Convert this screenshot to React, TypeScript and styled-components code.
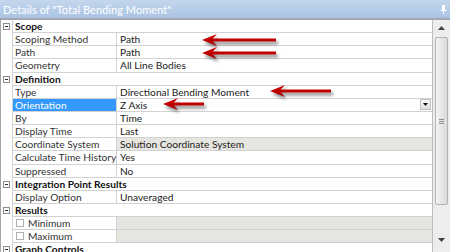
import styled, { createGlobalStyle } from "styled-components";

const GlobalStyle = createGlobalStyle`
  html, body {
    margin: 0;
    padding: 0;
    background: #ffffff;
  }
  body {
    font-family: Lato, "Liberation Sans", sans-serif;
    overflow: hidden;
  }
`;

const ROW_H = 13.15;

const Panel = styled.div`
  position: relative;
  width: 450px;
  height: 252px;
  overflow: hidden;
  display: flex;
  flex-direction: column;
  background: #ffffff;
`;

const TitleBar = styled.div`
  flex: none;
  height: 20px;
  box-sizing: border-box;
  display: flex;
  align-items: center;
  justify-content: space-between;
  padding: 0 3px 0 3px;
  background: linear-gradient(#c4d6ec, #aac4e4);
  border-bottom: 2px solid #a4a8ad;
  color: #ffffff;
  font-size: 11px;
`;

const Title = styled.span`
  white-space: nowrap;
  letter-spacing: 0.05px;
`;

const Body = styled.div`
  flex: 1;
  min-height: 0;
  display: flex;
`;

const Grid = styled.div`
  flex: 1;
  border-left: 1px solid #a6a6a6;
  border-right: 1px solid #bdbdbd;
  font-size: 10.2px;
`;

const Row = styled.div`
  display: grid;
  grid-template-columns: 11px 104px 1fr;
  height: ${ROW_H}px;
`;

const Gutter = styled.div`
  display: flex;
  align-items: center;
  justify-content: center;
  padding-right: 1px;
`;

const Toggle = styled.div`
  width: 7px;
  height: 7px;
  box-sizing: border-box;
  border: 1px solid #8c8c8c;
  background: #ffffff;
  display: flex;
  align-items: center;
  justify-content: center;
  &::after {
    content: "";
    width: 3px;
    height: 1px;
    background: #2a2a2a;
  }
`;

const Cell = styled.div<{ $span?: boolean; $shade?: "selected" | "readonly" }>`
  box-sizing: border-box;
  grid-column: ${(p) => (p.$span ? "2 / 4" : "auto")};
  display: flex;
  align-items: center;
  gap: 4px;
  min-width: 0;
  padding-left: 2px;
  border-left: 1px solid #d2d2d2;
  border-bottom: 1px solid #d2d2d2;
  white-space: nowrap;
  overflow: hidden;
  line-height: 12px;
  background: ${(p) =>
    p.$shade === "selected"
      ? "#3399ff"
      : p.$shade === "readonly"
      ? "#e7e5e0"
      : "#ffffff"};
  color: ${(p) => (p.$shade === "selected" ? "#ffffff" : "#333333")};
`;

const HeaderLabel = styled.span`
  font-weight: 700;
  color: #111111;
`;

const Value = styled.span`
  flex: 1;
  color: #1c1c1c;
  padding-left: 1px;
`;

const Check = styled.span`
  width: 8px;
  height: 8px;
  box-sizing: border-box;
  border: 1px solid #b0b0b0;
  background: #ffffff;
  margin-left: 1px;
  flex: none;
`;

const DropButton = styled.span`
  flex: none;
  width: 11px;
  height: 11px;
  margin-right: 1px;
  box-sizing: border-box;
  border: 1px solid #c2c2c2;
  background: linear-gradient(#f8f8f8, #dedede);
  display: flex;
  align-items: center;
  justify-content: center;
`;

const ScrollBar = styled.div`
  flex: none;
  width: 17px;
  background: #ededed;
  display: flex;
  flex-direction: column;
  align-items: center;
`;

const ScrollButton = styled.div<{ $grow?: boolean }>`
  width: 100%;
  height: 16px;
  display: flex;
  align-items: center;
  justify-content: center;
  margin-top: ${(p) => (p.$grow ? "auto" : "0")};
  margin-bottom: ${(p) => (p.$grow ? "4px" : "0")};
`;

const Thumb = styled.div`
  width: 13px;
  height: 168px;
  box-sizing: border-box;
  margin-top: 1px;
  border: 1px solid #b3b3b3;
  border-radius: 2px;
  background: linear-gradient(to right, #f4f4f4, #dadada);
  display: flex;
  flex-direction: column;
  align-items: center;
  justify-content: center;
  gap: 1px;
`;

const Grip = styled.span`
  width: 5px;
  height: 1px;
  background: #8d8d8d;
`;

const ArrowSvg = styled.svg<{ $x: number; $y: number }>`
  position: absolute;
  left: ${(p) => p.$x}px;
  top: ${(p) => p.$y - 9}px;
  overflow: visible;
  filter: drop-shadow(2px 3px 1.5px rgba(0, 0, 0, 0.45));
`;

type Prop = {
  name: string;
  value?: string;
  selected?: boolean;
  readonly?: boolean;
  dropdown?: boolean;
  checkbox?: boolean;
};

type Section = { title: string; props: Prop[] };

const sections: Section[] = [
  {
    title: "Scope",
    props: [
      { name: "Scoping Method", value: "Path" },
      { name: "Path", value: "Path" },
      { name: "Geometry", value: "All Line Bodies" },
    ],
  },
  {
    title: "Definition",
    props: [
      { name: "Type", value: "Directional Bending Moment" },
      { name: "Orientation", value: "Z Axis", selected: true, dropdown: true },
      { name: "By", value: "Time" },
      { name: "Display Time", value: "Last" },
      { name: "Coordinate System", value: "Solution Coordinate System", readonly: true },
      { name: "Calculate Time History", value: "Yes" },
      { name: "Suppressed", value: "No" },
    ],
  },
  {
    title: "Integration Point Results",
    props: [{ name: "Display Option", value: "Unaveraged" }],
  },
  {
    title: "Results",
    props: [
      { name: "Minimum", checkbox: true, readonly: true },
      { name: "Maximum", checkbox: true, readonly: true },
    ],
  },
  { title: "Graph Controls", props: [] },
];

function RedArrow({ x, y, length }: { x: number; y: number; length: number }) {
  const hl = 15;
  const hh = 6;
  const t = 1.6;
  const c = 9;
  const pts = [
    [0, c],
    [hl, c - hh],
    [hl * 0.72, c - t],
    [length, c - t],
    [length, c + t],
    [hl * 0.72, c + t],
    [hl, c + hh],
  ]
    .map((p) => p.join(","))
    .join(" ");
  return (
    <ArrowSvg $x={x} $y={y} width={length} height={18} viewBox={`0 0 ${length} 18`}>
      <defs>
        <linearGradient id="redfill" x1="0" y1="0" x2="0" y2="1">
          <stop offset="0" stopColor="#d70000" />
          <stop offset="1" stopColor="#a80000" />
        </linearGradient>
      </defs>
      <polygon points={pts} fill="url(#redfill)" />
    </ArrowSvg>
  );
}

function PropRow({ p }: { p: Prop }) {
  return (
    <Row>
      <Gutter />
      <Cell $shade={p.selected ? "selected" : undefined}>
        {p.checkbox && <Check />}
        {p.name}
      </Cell>
      <Cell $shade={p.readonly ? "readonly" : undefined}>
        <Value>{p.value}</Value>
        {p.dropdown && (
          <DropButton>
            <svg width="5" height="3" viewBox="0 0 5 3">
              <path d="M0 0h5L2.5 3z" fill="#111" />
            </svg>
          </DropButton>
        )}
      </Cell>
    </Row>
  );
}

export default function App() {
  return (
    <>
      <GlobalStyle />
      <Panel>
        <TitleBar>
          <Title>Details of "Total Bending Moment"</Title>
          <svg width="7" height="9" viewBox="0 0 7 9">
            <path d="M2 0h3v5h1.5v1H.5V5H2z M3 6h1v3H3z" fill="#ffffff" />
          </svg>
        </TitleBar>
        <Body>
          <Grid>
            {sections.map((s) => (
              <div key={s.title}>
                <Row>
                  <Gutter>
                    <Toggle />
                  </Gutter>
                  <Cell $span>
                    <HeaderLabel>{s.title}</HeaderLabel>
                  </Cell>
                </Row>
                {s.props.map((p) => (
                  <PropRow key={p.name} p={p} />
                ))}
              </div>
            ))}
          </Grid>
          <ScrollBar>
            <ScrollButton>
              <svg width="7" height="4" viewBox="0 0 7 4">
                <path d="M0 4h7L3.5 0z" fill="#404040" />
              </svg>
            </ScrollButton>
            <Thumb>
              <Grip />
              <Grip />
              <Grip />
            </Thumb>
            <ScrollButton $grow>
              <svg width="7" height="4" viewBox="0 0 7 4">
                <path d="M0 0h7L3.5 4z" fill="#404040" />
              </svg>
            </ScrollButton>
          </ScrollBar>
        </Body>
        <RedArrow x={202} y={40} length={74} />
        <RedArrow x={202} y={53} length={74} />
        <RedArrow x={270} y={91} length={61} />
        <RedArrow x={163} y={104} length={41} />
      </Panel>
    </>
  );
}
